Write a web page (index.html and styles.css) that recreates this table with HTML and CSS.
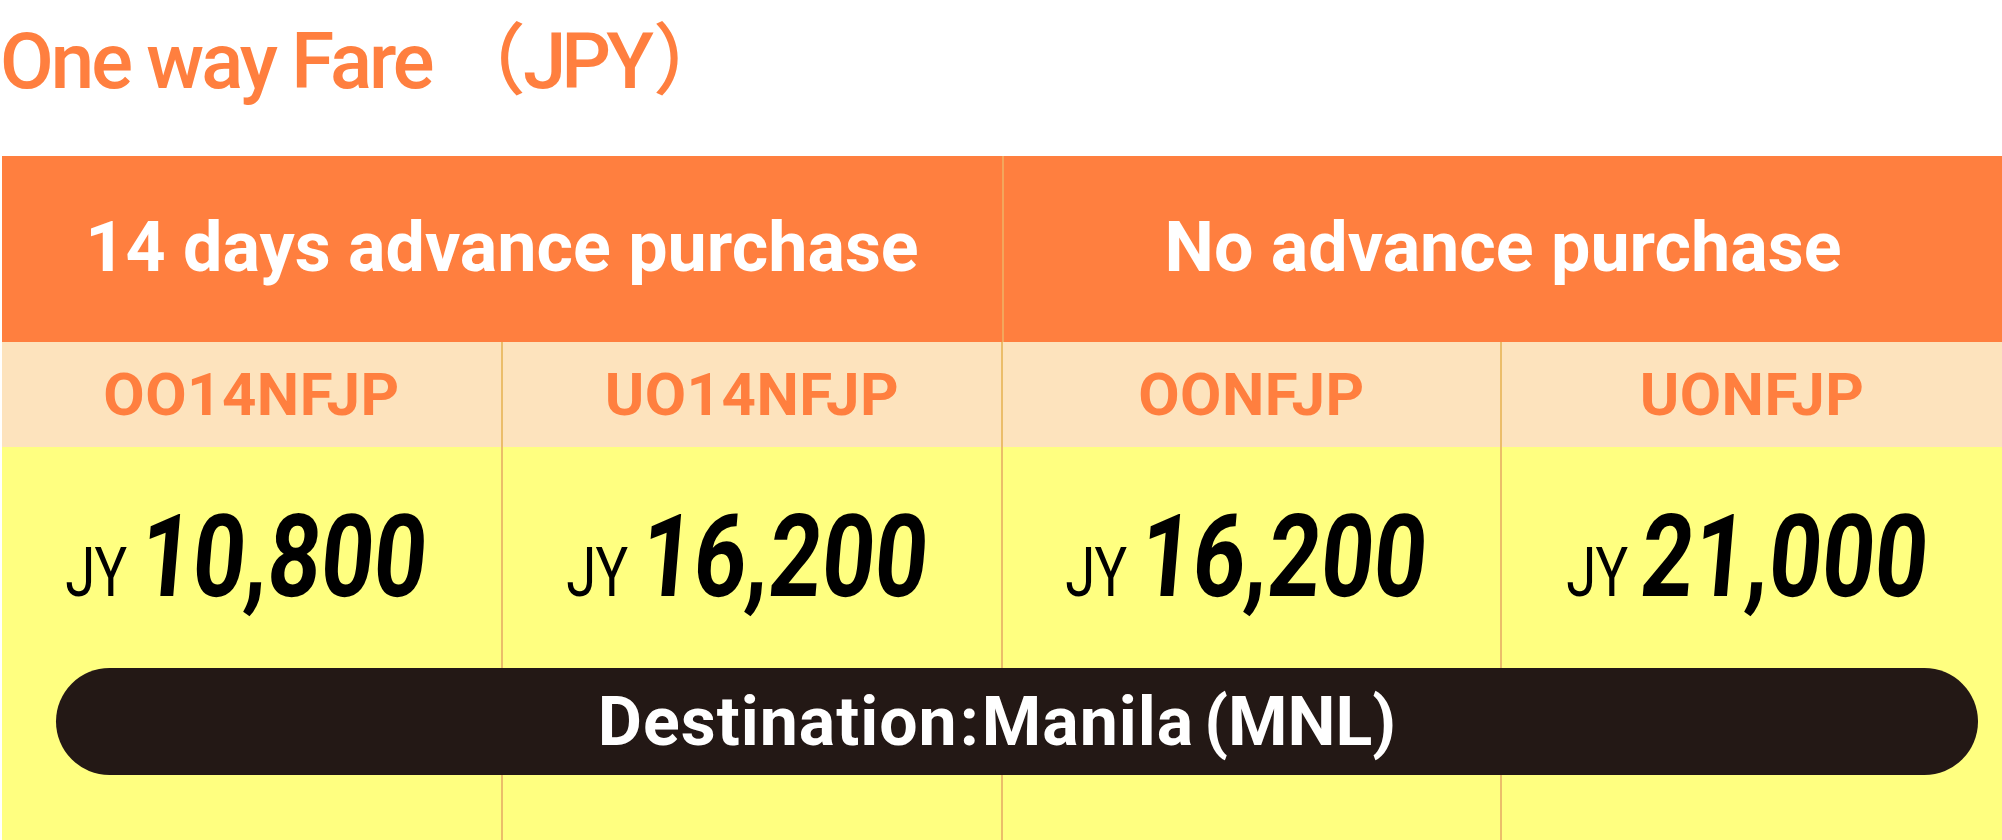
FILE: index.html
```html
<!DOCTYPE html>
<html lang="en">
<head>
<meta charset="utf-8">
<title>One way Fare (JPY)</title>
<link rel="stylesheet" href="styles.css">
</head>
<body>
<div class="title">One way Fare （<span class="jpy">JPY</span>）</div>
<div class="fare">
  <div class="head">
    <div class="hcell">14 days advance purchase</div>
    <div class="hcell">No advance purchase</div>
  </div>
  <div class="codes">
    <div class="code">OO14NFJP</div>
    <div class="code">UO14NFJP</div>
    <div class="code">OONFJP</div>
    <div class="code">UONFJP</div>
  </div>
  <div class="prices">
    <div class="pcell"><span class="price"><span class="cur">JY</span><span class="amt">10,800</span></span></div>
    <div class="pcell"><span class="price"><span class="cur">JY</span><span class="amt">16,200</span></span></div>
    <div class="pcell"><span class="price"><span class="cur">JY</span><span class="amt">16,200</span></span></div>
    <div class="pcell"><span class="price"><span class="cur">JY</span><span class="amt">21,000</span></span></div>
    <div class="dest">Destination<span class="colon">:</span>Manila<span class="paren">(MNL)</span></div>
  </div>
</div>
</body>
</html>
```
FILE: styles.css
```css
html, body {
  margin: 0;
  padding: 0;
  overflow: hidden;
  background: #ffffff;
}

body {
  width: 2002px;
  height: 840px;
  font-family: "Roboto", "Noto Sans CJK JP", sans-serif;
}

.title {
  box-sizing: border-box;
  height: 156px;
  padding-top: 23px;
  font-size: 78px;
  line-height: 78px;
  font-weight: 500;
  color: #ff7f3f;
  letter-spacing: -3px;
  white-space: nowrap;
}

.jpy {
  letter-spacing: -5px;
  margin-right: 4px;
}

.fare {
  margin-left: 2px;
  width: 2000px;
}

.head {
  display: grid;
  grid-template-columns: 1000px 1000px;
  height: 186px;
  background: #ff7f3f;
}

.hcell {
  display: flex;
  align-items: center;
  justify-content: center;
  padding-bottom: 4px;
  color: #ffffff;
  font-weight: 700;
  font-size: 70px;
  line-height: 1;
  white-space: nowrap;
}

.hcell + .hcell {
  border-left: 2px solid #f3a65c;
}

.codes {
  display: grid;
  grid-template-columns: 499px 500px 499px 502px;
  height: 105px;
  background: #fde3bd;
}

.code {
  display: flex;
  align-items: center;
  justify-content: center;
  color: #ff7f3f;
  font-weight: 700;
  font-size: 60px;
  line-height: 1;
  letter-spacing: 0.5px;
}

.code + .code,
.pcell + .pcell {
  border-left: 2px solid #ebbd6a;
}

.prices {
  position: relative;
  display: grid;
  grid-template-columns: 499px 500px 499px 502px;
  height: 393px;
  background: #ffff80;
}

.pcell {
  display: flex;
  justify-content: center;
  align-items: flex-start;
  padding-top: 52px;
  padding-right: 10px;
}

.price {
  display: inline-flex;
  align-items: baseline;
  transform: scaleX(0.8);
  color: #000000;
}

.cur {
  font-size: 68px;
  line-height: 1;
  font-weight: 400;
  letter-spacing: -1px;
  margin-right: 18px;
}

.amt {
  display: inline-block;
  font-size: 115px;
  line-height: 1;
  font-weight: 700;
  transform: skewX(-6deg);
}

.dest {
  position: absolute;
  left: 54px;
  right: 24px;
  top: 221px;
  height: 107px;
  border-radius: 54px;
  background: #231815;
  color: #ffffff;
  display: flex;
  align-items: center;
  justify-content: center;
  padding-right: 40px;
  font-weight: 700;
  font-size: 68px;
  line-height: 1;
  letter-spacing: 1px;
  white-space: nowrap;
}

.colon {
  margin: 0 2px;
}

.paren {
  margin-left: 10px;
  letter-spacing: 0;
}
```
